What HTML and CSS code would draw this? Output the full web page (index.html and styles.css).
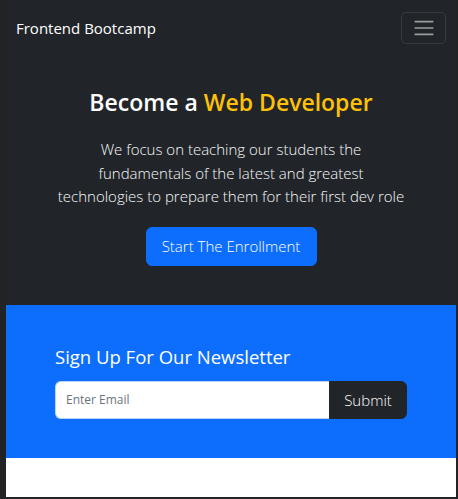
FILE: index.html
```html
<!DOCTYPE html>
<html lang="en">
<head>
<meta charset="utf-8">
<title>Frontend Bootcamp</title>
<link rel="stylesheet" href="styles.css">
</head>
<body>
<div class="page">
  <nav class="navbar">
    <a class="brand" href="#">Frontend Bootcamp</a>
    <button class="toggler" type="button" aria-label="Toggle navigation">
      <svg width="24" height="24" viewBox="0 0 30 30" aria-hidden="true">
        <path d="M4 7h22M4 15h22M4 23h22" stroke="rgba(255,255,255,0.55)" stroke-width="2" stroke-linecap="round" fill="none"/>
      </svg>
    </button>
  </nav>

  <section class="hero">
    <h1 class="hero-title">Become a <span class="accent">Web Developer</span></h1>
    <p class="lead">We focus on teaching our students the fundamentals of the latest and greatest technologies to prepare them for their first dev role</p>
    <a class="btn btn-primary" href="#">Start The Enrollment</a>
  </section>

  <section class="newsletter">
    <h3 class="news-title">Sign Up For Our Newsletter</h3>
    <div class="input-group">
      <input class="email" type="text" placeholder="Enter Email">
      <button class="btn-dark" type="button">Submit</button>
    </div>
  </section>
</div>
</body>
</html>
```

FILE: styles.css
```css
* { box-sizing: border-box; }

html, body { height: 100%; }

body {
  margin: 0;
  padding: 0 2px 2px 6px;
  background: #222324;
  font-family: "Open Sans", "Noto Sans", sans-serif;
  display: flex;
  flex-direction: column;
}

.page {
  flex: 1;
  background: #ffffff;
  display: flex;
  flex-direction: column;
}

.navbar {
  background: #212529;
  display: flex;
  justify-content: space-between;
  align-items: center;
  padding: 12px 10px 12px 10px;
  height: 56px;
}

.brand {
  color: #ffffff;
  text-decoration: none;
  font-size: 15px;
  line-height: 24px;
}

.toggler {
  width: 45px;
  height: 32px;
  padding: 0;
  background: transparent;
  border: 1px solid rgba(255, 255, 255, 0.1);
  border-radius: 5px;
  display: flex;
  align-items: center;
  justify-content: center;
}

.toggler svg { display: block; }

.hero {
  background: #212529;
  color: #f8f9fa;
  text-align: center;
  padding: 32px 38px 39px;
  display: flex;
  flex-direction: column;
  align-items: center;
}

.hero-title {
  margin: 0;
  font-size: 23px;
  line-height: 29px;
  font-weight: 600;
  color: #ffffff;
}

.accent { color: #ffc107; }

.lead {
  margin: 21px 0 0;
  font-size: 15px;
  line-height: 23.5px;
  font-weight: 300;
  max-width: 350px;
}

.btn {
  margin-top: 18px;
  display: inline-flex;
  align-items: center;
  justify-content: center;
  height: 39px;
  width: 171px;
  font-size: 15px;
  font-weight: 300;
  text-decoration: none;
  border-radius: 6px;
}

.btn-primary {
  background: #0d6efd;
  border: 1px solid #0d6efd;
  color: #ffffff;
}

.newsletter {
  background: #0d6efd;
  padding: 40px 49px 39px;
  color: #ffffff;
}

.news-title {
  margin: 0 0 13px;
  font-size: 18.5px;
  line-height: 23px;
  font-weight: 500;
}

.input-group {
  display: flex;
  height: 38px;
}

.email {
  flex: 1;
  min-width: 0;
  border: 1px solid #b9d3fb;
  border-right: none;
  border-radius: 6px 0 0 6px;
  padding: 0 10px;
  font-family: "Open Sans", "Noto Sans", sans-serif;
  font-size: 12px;
  color: #212529;
  background: #ffffff;
  outline: none;
}

.email::placeholder { color: #6c757d; }

.btn-dark {
  width: 78px;
  background: #212529;
  color: #ffffff;
  border: 1px solid #212529;
  border-radius: 0 6px 6px 0;
  font-family: "Open Sans", "Noto Sans", sans-serif;
  font-size: 15px;
  font-weight: 300;
  padding: 0;
}
```
